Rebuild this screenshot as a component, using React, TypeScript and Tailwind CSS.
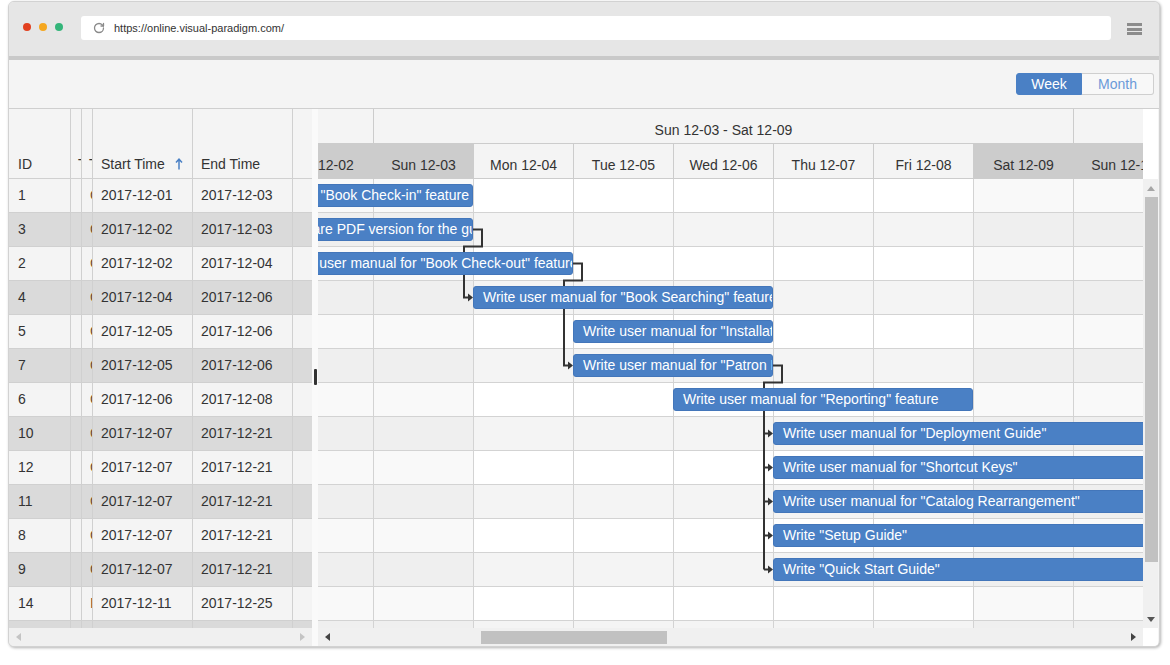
import React from "react";
import { RotateCw } from "lucide-react";

type Task = {
  id: string;
  status: string;
  start: string;
  end: string;
  name: string;
};

const tasks: Task[] = [
  { id: "1", status: "Completed", start: "2017-12-01", end: "2017-12-03", name: 'Write user manual for "Book Check-in" feature' },
  { id: "3", status: "Completed", start: "2017-12-02", end: "2017-12-03", name: "Prepare PDF version for the guide" },
  { id: "2", status: "Completed", start: "2017-12-02", end: "2017-12-04", name: 'Write user manual for "Book Check-out" feature' },
  { id: "4", status: "Completed", start: "2017-12-04", end: "2017-12-06", name: 'Write user manual for "Book Searching" feature' },
  { id: "5", status: "Completed", start: "2017-12-05", end: "2017-12-06", name: 'Write user manual for "Installation Guide"' },
  { id: "7", status: "Completed", start: "2017-12-05", end: "2017-12-06", name: 'Write user manual for "Patron Management" feature' },
  { id: "6", status: "Completed", start: "2017-12-06", end: "2017-12-08", name: 'Write user manual for "Reporting" feature' },
  { id: "10", status: "Completed", start: "2017-12-07", end: "2017-12-21", name: 'Write user manual for "Deployment Guide"' },
  { id: "12", status: "Completed", start: "2017-12-07", end: "2017-12-21", name: 'Write user manual for "Shortcut Keys"' },
  { id: "11", status: "Completed", start: "2017-12-07", end: "2017-12-21", name: 'Write user manual for "Catalog Rearrangement"' },
  { id: "8", status: "Completed", start: "2017-12-07", end: "2017-12-21", name: 'Write "Setup Guide"' },
  { id: "9", status: "Completed", start: "2017-12-07", end: "2017-12-21", name: 'Write "Quick Start Guide"' },
  { id: "14", status: "In Progress", start: "2017-12-11", end: "2017-12-25", name: "Write release notes" },
  { id: "13", status: "In Progress", start: "2017-12-11", end: "2017-12-25", name: "Review all guides" },
];

const DOW = ["Sun", "Mon", "Tue", "Wed", "Thu", "Fri", "Sat"];

// timeline starts on Sun 11-26, scrolled so that Sat 12-02 is half visible
const days = Array.from({ length: 21 }, (_, i) => {
  const month = i < 5 ? 11 : 12;
  const day = i < 5 ? 26 + i : i - 4;
  const dow = i % 7;
  return {
    label: `${DOW[dow]} ${month}-${String(day).padStart(2, "0")}`,
    weekend: dow === 0 || dow === 6,
  };
});

const weeks = ["Sun 11-26 - Sat 12-02", "Sun 12-03 - Sat 12-09", "Sun 12-10 - Sat 12-16"];

const DAY_W = 100;
const dayIndex = (d: string) => Number(d.slice(8)) + 4;

const Arrow = ({ dir, color }: { dir: "up" | "down" | "left" | "right"; color: string }) => {
  const pts = {
    up: "0,5 4,0 8,5",
    down: "0,0 8,0 4,5",
    left: "5,0 5,8 0,4",
    right: "0,0 0,8 5,4",
  }[dir];
  const vertical = dir === "up" || dir === "down";
  return (
    <svg width={vertical ? 8 : 5} height={vertical ? 5 : 8} viewBox={vertical ? "0 0 8 5" : "0 0 5 8"}>
      <polygon points={pts} fill={color} />
    </svg>
  );
};

// dependency lines, in timeline coordinates
const Links = () => {
  const head = (x: number, y: number) => `${x - 5},${y - 4} ${x},${y} ${x - 5},${y + 4}`;
  const fan = [254.5, 288.5, 322.5, 356.5, 390.5];
  return (
    <svg className="absolute top-0 left-0 z-10 pointer-events-none" width={2100} height={480}>
      <g fill="none" stroke="#333" strokeWidth={2}>
        <path d="M800 50.5 H809 V67.5 H791 V118.5 H796" />
        <path d="M900 84.5 H909 V101.5 H891 V186.5 H896" />
        <path d="M1100 186.5 H1109 V203.5 H1091 V390.5" />
        {fan.map((y) => (
          <path key={y} d={`M1091 ${y} H1096`} />
        ))}
      </g>
      <g fill="#333">
        <polygon points={head(800, 118.5)} />
        <polygon points={head(900, 186.5)} />
        {fan.map((y) => (
          <polygon key={y} points={head(1100, y)} />
        ))}
      </g>
    </svg>
  );
};

const GridTable = () => (
  <div className="w-[303px] flex flex-col text-[14px] text-[#333]">
    <div className="h-[70px] shrink-0 flex border-b border-[#d0d0d0] bg-[#f4f4f4]">
      <div className="w-[62px] border-r border-[#d0d0d0] pl-[9px] pt-[45px] leading-[20px]">ID</div>
      <div className="w-[11px] border-r border-[#d0d0d0] pl-[7px] pt-[45px] leading-[20px] overflow-hidden whitespace-nowrap">Task</div>
      <div className="w-[11px] border-r border-[#d0d0d0] pl-[7px] pt-[45px] leading-[20px] overflow-hidden whitespace-nowrap">Type</div>
      <div className="w-[100px] border-r border-[#d0d0d0] pl-[8px] pt-[45px] leading-[20px] flex items-start">
        <span>Start Time</span>
        <svg className="ml-[10px] mt-[4px]" width="8" height="12" viewBox="0 0 8 12">
          <path d="M4 11.5 V1.5 M1 4.5 L4 1.2 L7 4.5" stroke="#4a80c5" strokeWidth="1.5" fill="none" />
        </svg>
      </div>
      <div className="w-[100px] border-r border-[#d0d0d0] pl-[8px] pt-[45px] leading-[20px]">End Time</div>
      <div className="w-[19px]" />
    </div>
    <div className="flex-1 overflow-hidden">
      {tasks.map((t, i) => (
        <div
          key={t.id}
          className={`h-[34px] flex border-b border-[#d0d0d0] ${i % 2 ? "bg-[#dadada]" : "bg-[#f4f4f4]"}`}
        >
          <div className="w-[62px] border-r border-[#d0d0d0] pl-[9px] flex items-center">{t.id}</div>
          <div className="w-[11px] border-r border-[#d0d0d0]" />
          <div className="w-[11px] border-r border-[#d0d0d0] pl-[8px] flex items-center overflow-hidden whitespace-nowrap text-[#6b4a2a]">
            {t.status}
          </div>
          <div className="w-[100px] border-r border-[#d0d0d0] pl-[8px] flex items-center">{t.start}</div>
          <div className="w-[100px] border-r border-[#d0d0d0] pl-[8px] flex items-center">{t.end}</div>
          <div className="w-[19px]" />
        </div>
      ))}
    </div>
    <div className="h-[18px] shrink-0 bg-[#f0f0f0] flex items-center justify-between px-[7px]">
      <Arrow dir="left" color="#c4c4c4" />
      <Arrow dir="right" color="#c4c4c4" />
    </div>
  </div>
);

const Gantt = () => (
  <div className="flex-1 flex flex-col text-[#333]">
    {/* timescale */}
    <div className="h-[70px] shrink-0 flex">
      <div className="w-[825px] overflow-hidden bg-[#f4f4f4] border-b border-[#cccccc]">
        <div className="w-[2100px] -ml-[645px] text-[14px]">
          <div className="h-[35px] flex border-b border-[#cccccc]">
            {weeks.map((w) => (
              <div key={w} className="w-[700px] border-l border-[#cccccc] text-center pt-[11px] leading-[20px]">
                {w}
              </div>
            ))}
          </div>
          <div className="h-[34px] flex">
            {days.map((d) => (
              <div
                key={d.label}
                className={`w-[100px] border-l border-[#cccccc] text-center pt-[11px] leading-[20px] ${
                  d.weekend ? "bg-[#cccccc]" : ""
                }`}
              >
                {d.label}
              </div>
            ))}
          </div>
        </div>
      </div>
      <div className="w-[15px] bg-white" />
    </div>

    {/* task rows */}
    <div className="flex-1 flex overflow-hidden">
      <div className="w-[825px] overflow-hidden">
        <div className="relative w-[2100px] -ml-[645px]">
          {tasks.map((t, i) => {
            const s = dayIndex(t.start);
            const e = dayIndex(t.end);
            return (
              <div key={t.id} className="relative h-[34px] flex border-b border-[#d3d3d3]">
                {days.map((d) => (
                  <div
                    key={d.label}
                    className={`w-[100px] h-full border-l border-[#d3d3d3] ${
                      i % 2
                        ? d.weekend
                          ? "bg-[#efefef]"
                          : "bg-[#f4f4f4]"
                        : d.weekend
                        ? "bg-[#f9f9f9]"
                        : "bg-white"
                    }`}
                  />
                ))}
                <div
                  className="absolute top-[5px] h-[23px] z-20 rounded-[3px] bg-[#4a80c5] border border-[#4376ba] text-white text-[14px] leading-[21px] pl-[9px] overflow-hidden whitespace-nowrap"
                  style={{ left: s * DAY_W, width: (e - s + 1) * DAY_W }}
                >
                  {t.name}
                </div>
              </div>
            );
          })}
          <Links />
        </div>
      </div>
      <div className="w-[15px] bg-[#f0f0f0] flex flex-col items-center">
        <div className="h-[18px] flex items-center">
          <Arrow dir="up" color="#a6a6a6" />
        </div>
        <div className="w-[13px] ml-[2px] h-[365px] bg-[#c1c1c1]" />
        <div className="flex-1" />
        <div className="h-[18px] flex items-center">
          <Arrow dir="down" color="#555" />
        </div>
      </div>
    </div>

    {/* horizontal scrollbar */}
    <div className="h-[18px] shrink-0 flex">
      <div className="w-[825px] bg-[#f0f0f0] flex items-center px-[7px]">
        <Arrow dir="left" color="#444" />
        <div className="ml-[151px] w-[186px] h-[13px] bg-[#c1c1c1]" />
        <div className="flex-1" />
        <Arrow dir="right" color="#444" />
      </div>
      <div className="w-[15px] bg-white" />
    </div>
  </div>
);

export default function App() {
  return (
    <div className="w-[1170px] h-[665px] bg-white pt-[1px] pl-[8px] font-['Liberation_Sans',Arial,sans-serif]">
      <div className="w-[1152px] h-[646px] rounded-[6px] border border-[#d2d2d2] shadow-[1px_1px_3px_rgba(0,0,0,0.3)] overflow-hidden flex flex-col bg-[#f4f4f4]">
        {/* browser chrome */}
        <div className="h-[54px] shrink-0 bg-[#e6e6e6] flex items-start">
          <div className="flex gap-[8px] pl-[14px] mt-[21px]">
            <span className="w-[8px] h-[8px] rounded-full bg-[#e2401f]" />
            <span className="w-[8px] h-[8px] rounded-full bg-[#f5a71f]" />
            <span className="w-[8px] h-[8px] rounded-full bg-[#34b57a]" />
          </div>
          <div className="ml-[18px] mt-[14px] w-[1030px] h-[24px] bg-white rounded-[3px] flex items-center pl-[12px] text-[11px] text-[#333]">
            <RotateCw size={12} strokeWidth={2.6} color="#8a8a8a" />
            <span className="ml-[9px]">https://online.visual-paradigm.com/</span>
          </div>
          <div className="ml-[16px] mt-[21px] flex flex-col gap-[1.5px]">
            <span className="w-[15px] h-[3px] bg-[#8c8c8c]" />
            <span className="w-[15px] h-[3px] bg-[#8c8c8c]" />
            <span className="w-[15px] h-[3px] bg-[#8c8c8c]" />
          </div>
        </div>
        <div className="h-[4px] shrink-0 bg-[#c9c9c9]" />

        {/* view switch */}
        <div className="h-[49px] shrink-0 border-b border-[#cfcfcf] flex items-center justify-end pr-[5px]">
          <div className="flex h-[22px] text-[14px]">
            <button className="w-[66px] bg-[#4a80c5] text-white rounded-l-[3px] border border-[#4a80c5]">Week</button>
            <button className="w-[72px] bg-[#f8f8f8] text-[#6b9ad8] rounded-r-[3px] border border-l-0 border-[#cfcfcf]">
              Month
            </button>
          </div>
        </div>

        <div className="flex-1 flex min-h-0">
          <GridTable />
          <div className="w-[6px] bg-[#fafafa] flex items-center justify-center">
            <div className="w-[3px] h-[16px] rounded-[1px] bg-[#333] -mt-[2px]" />
          </div>
          <Gantt />
        </div>
      </div>
    </div>
  );
}
